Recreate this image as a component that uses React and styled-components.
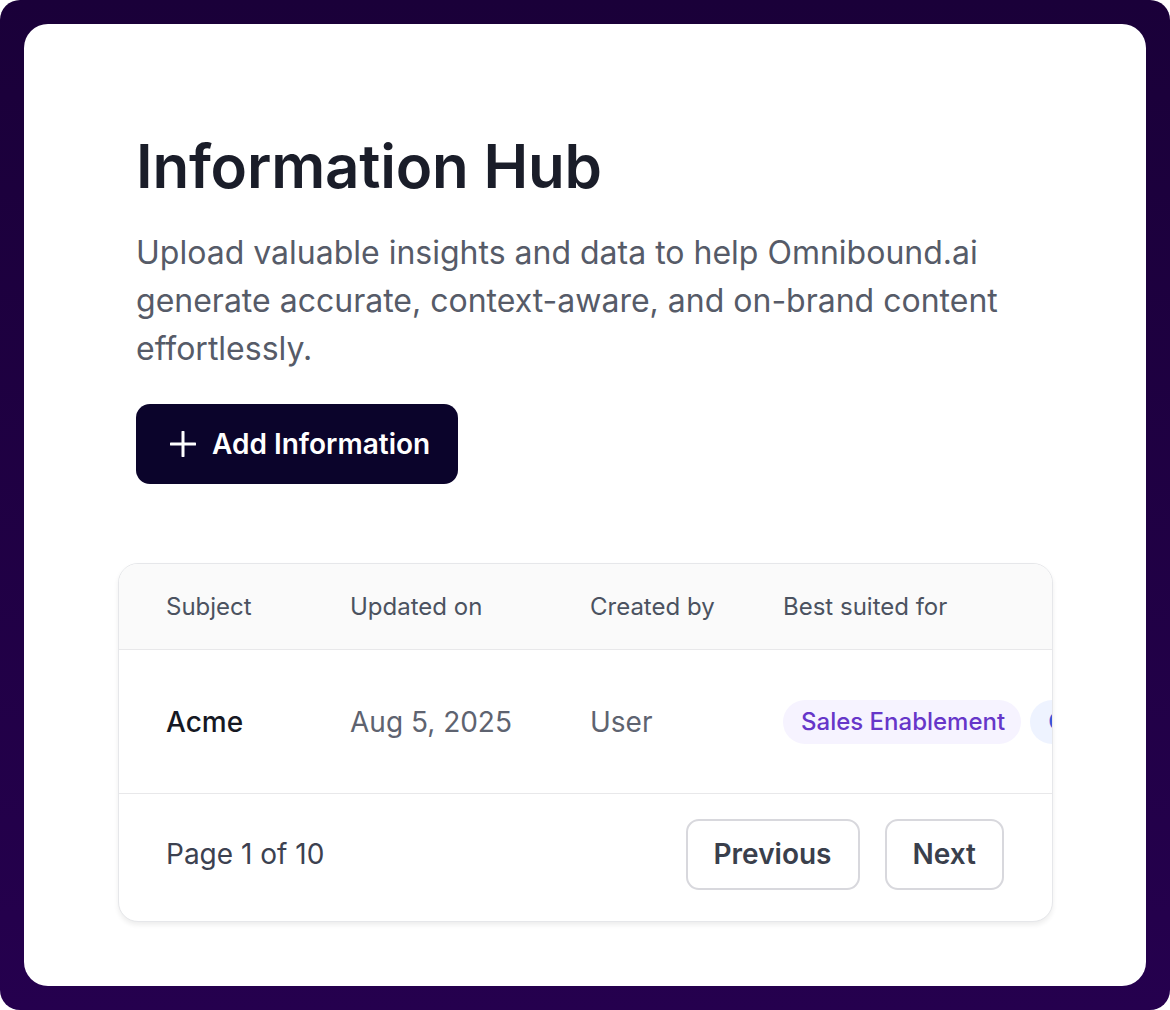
import styled, { createGlobalStyle } from 'styled-components';

const GlobalStyle = createGlobalStyle`
  html, body {
    margin: 0;
    padding: 0;
    background: #ffffff;
  }
  body {
    font-family: Inter, "Noto Sans", "Liberation Sans", sans-serif;
    -webkit-font-smoothing: antialiased;
  }
  * {
    box-sizing: border-box;
  }
`;

const Frame = styled.div`
  height: 1010px;
  padding: 24px;
  border-radius: 20px;
  background: linear-gradient(180deg, #1a0039 0%, #25004e 100%);
`;

const Card = styled.div`
  height: 100%;
  background: #ffffff;
  border-radius: 24px;
  padding: 106px 111px 0 112px;
  display: flex;
  flex-direction: column;
  align-items: flex-start;
`;

const Title = styled.h1`
  margin: 0;
  font-size: 60px;
  line-height: 72px;
  font-weight: 600;
  color: #1a1d29;
  letter-spacing: -0.2px;
`;

const Description = styled.p`
  margin: 27px 0 0;
  max-width: 880px;
  font-size: 32px;
  line-height: 48px;
  color: #565b68;
`;

const AddButton = styled.button`
  margin-top: 31px;
  height: 80px;
  padding: 0 28px 0 34px;
  display: flex;
  align-items: center;
  gap: 16px;
  border: none;
  border-radius: 14px;
  background: #0b042b;
  color: #ffffff;
  font-family: inherit;
  font-size: 28px;
  font-weight: 600;
  cursor: pointer;
`;

const TableCard = styled.div`
  margin: 79px -18px 0;
  width: calc(100% + 36px);
  border: 1.5px solid #e6e7ea;
  border-radius: 20px;
  background: #ffffff;
  box-shadow: 0 3px 5px rgba(0, 0, 0, 0.07);
  overflow: hidden;
`;

const Row = styled.div`
  display: grid;
  grid-template-columns: 184px 240px 193px max-content;
  align-items: center;
  padding-left: 47px;
  height: ${(p) => p.h}px;
  background: ${(p) => (p.head ? '#fafafa' : '#ffffff')};
  border-bottom: 1.5px solid #e8e8ea;
  white-space: nowrap;
`;

const HeadCell = styled.div`
  font-size: 24px;
  color: #4b5260;
`;

const Cell = styled.div`
  font-size: 28px;
  font-weight: ${(p) => (p.strong ? 500 : 400)};
  color: ${(p) => (p.strong ? '#151823' : '#5e6370')};
`;

const Tags = styled.div`
  display: flex;
  gap: 9px;
`;

const Tag = styled.span`
  display: inline-flex;
  align-items: center;
  height: 44px;
  padding: 0 16px 0 18px;
  border-radius: 22px;
  font-size: 24px;
  font-weight: 500;
  background: ${(p) => (p.blue ? '#eef3ff' : '#f6f3ff')};
  color: ${(p) => (p.blue ? '#3a56d8' : '#6636c9')};
`;

const Footer = styled.div`
  height: 127px;
  display: flex;
  align-items: center;
  justify-content: space-between;
  padding: 0 48px 7px 47px;
`;

const PageInfo = styled.span`
  font-size: 28px;
  color: #3c4150;
`;

const Pager = styled.div`
  display: flex;
  gap: 25px;
`;

const PageButton = styled.button`
  height: 71px;
  padding: 0 26px;
  border: 2px solid #d8d8dd;
  border-radius: 13px;
  background: #ffffff;
  color: #3a3f4c;
  font-family: inherit;
  font-size: 28px;
  font-weight: 600;
  cursor: pointer;
`;

const PlusIcon = () => (
  <svg width="26" height="26" viewBox="0 0 26 26" fill="none">
    <path d="M13 1v24M1 13h24" stroke="#ffffff" strokeWidth="3" strokeLinecap="round" />
  </svg>
);

const rows = [
  {
    subject: 'Acme',
    updated: 'Aug 5, 2025',
    createdBy: 'User',
    tags: [
      { label: 'Sales Enablement' },
      { label: 'Content Marketing', blue: true },
    ],
  },
];

export default function App() {
  return (
    <>
      <GlobalStyle />
      <Frame>
        <Card>
          <Title>Information Hub</Title>
          <Description>
            Upload valuable insights and data to help Omnibound.ai generate accurate,
            context-aware, and on-brand content effortlessly.
          </Description>
          <AddButton>
            <PlusIcon />
            Add Information
          </AddButton>

          <TableCard>
            <Row head h={86}>
              <HeadCell>Subject</HeadCell>
              <HeadCell>Updated on</HeadCell>
              <HeadCell>Created by</HeadCell>
              <HeadCell>Best suited for</HeadCell>
            </Row>
            {rows.map((r) => (
              <Row key={r.subject} h={144}>
                <Cell strong>{r.subject}</Cell>
                <Cell>{r.updated}</Cell>
                <Cell>{r.createdBy}</Cell>
                <Tags>
                  {r.tags.map((t) => (
                    <Tag key={t.label} blue={t.blue}>{t.label}</Tag>
                  ))}
                </Tags>
              </Row>
            ))}
            <Footer>
              <PageInfo>Page 1 of 10</PageInfo>
              <Pager>
                <PageButton>Previous</PageButton>
                <PageButton>Next</PageButton>
              </Pager>
            </Footer>
          </TableCard>
        </Card>
      </Frame>
    </>
  );
}
